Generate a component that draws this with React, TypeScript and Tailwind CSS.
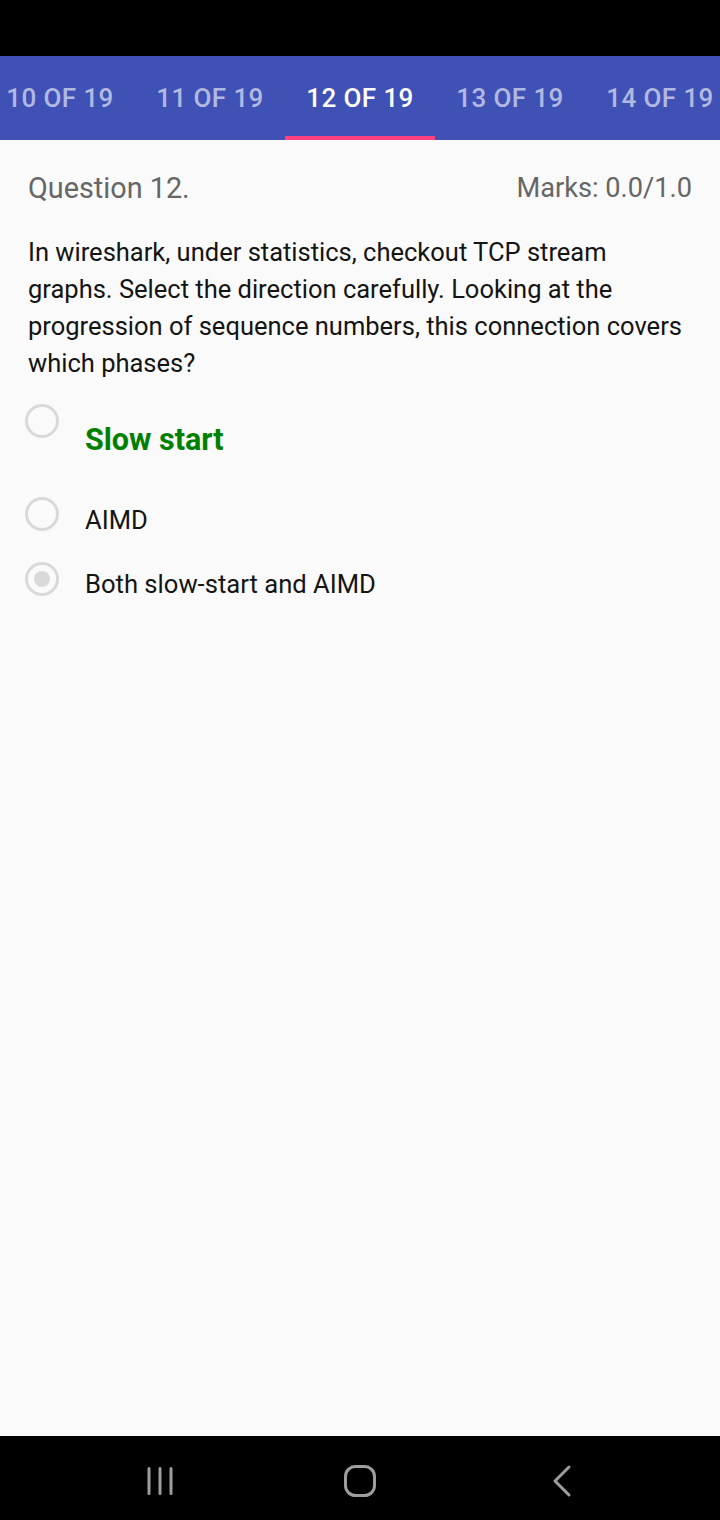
import React from "react";

const tabs = ["10 OF 19", "11 OF 19", "12 OF 19", "13 OF 19", "14 OF 19"];

function Radio({ checked }: { checked?: boolean }) {
  return (
    <div className="w-[34px] h-[34px] shrink-0 rounded-full border-[3px] border-[#d9d9d9] flex items-center justify-center">
      {checked && <div className="w-[16px] h-[16px] rounded-full bg-[#d9d9d9]" />}
    </div>
  );
}

export default function App() {
  return (
    <div
      className="w-[720px] h-[1520px] flex flex-col bg-[#fafafa] overflow-hidden"
      style={{ fontFamily: "Roboto, 'Noto Sans', sans-serif" }}
    >
      <div className="h-[56px] bg-black shrink-0" />
      <div className="h-[84px] bg-[#3f51b5] shrink-0 flex justify-center overflow-hidden">
        {tabs.map((t, i) => (
          <div key={t} className="w-[150px] shrink-0 flex flex-col">
            <div
              className={
                "flex-1 flex items-center justify-center text-[26px] tracking-[0.4px] font-medium pt-[5px] whitespace-nowrap " +
                (i === 2 ? "text-white" : "text-[#b2b9e1]")
              }
            >
              {t}
            </div>
            <div className={"h-[4px] " + (i === 2 ? "bg-[#ff4081]" : "")} />
          </div>
        ))}
      </div>
      <div className="flex-1 flex flex-col">
        <div className="flex justify-between items-center px-[28px] pt-[30px] h-[66px] leading-[36px] text-[#666666]">
          <span className="text-[28.8px]">Question 12.</span>
          <span className="text-[27.2px]">Marks: 0.0/1.0</span>
        </div>
        <p className="mt-[28px] pl-[28px] pr-[28px] text-[25.5px] leading-[37px] text-[#141414]">
          In wireshark, under statistics, checkout TCP stream graphs. Select the direction carefully. Looking at the progression of sequence numbers, this connection covers which phases?
        </p>
        <div className="mt-[22px] flex flex-col">
          <div className="flex items-start pl-[25px]">
            <Radio />
            <span className="ml-[26px] mt-[16px] text-[30.5px] leading-[40px] font-bold text-[#008000]">
              Slow start
            </span>
          </div>
          <div className="flex items-start pl-[25px] mt-[37px]">
            <Radio />
            <span className="ml-[26px] mt-[7px] text-[25.6px] leading-[32px] text-[#141414]">AIMD</span>
          </div>
          <div className="flex items-start pl-[25px] mt-[26px]">
            <Radio checked />
            <span className="ml-[26px] mt-[6px] text-[25.6px] leading-[32px] text-[#141414]">
              Both slow-start and AIMD
            </span>
          </div>
        </div>
      </div>
      <div className="h-[84px] bg-black shrink-0 flex items-center justify-center pt-[6px]">
        <div className="w-[201px] flex justify-center">
          <svg width="34" height="34" viewBox="0 0 34 34">
            <rect x="5.5" y="3" width="3" height="28" rx="1.5" fill="#9e9e9e" />
            <rect x="16.5" y="3" width="3" height="28" rx="1.5" fill="#9e9e9e" />
            <rect x="27.5" y="3" width="3" height="28" rx="1.5" fill="#9e9e9e" />
          </svg>
        </div>
        <div className="w-[201px] flex justify-center">
          <svg width="34" height="34" viewBox="0 0 34 34">
            <rect x="2.5" y="2.5" width="29" height="29" rx="10" fill="none" stroke="#9e9e9e" strokeWidth="3" />
          </svg>
        </div>
        <div className="w-[201px] flex justify-center">
          <svg width="24" height="34" viewBox="0 0 24 34">
            <path d="M20 3 L6 17 L20 31" fill="none" stroke="#9e9e9e" strokeWidth="3" strokeLinecap="round" strokeLinejoin="round" />
          </svg>
        </div>
      </div>
    </div>
  );
}
